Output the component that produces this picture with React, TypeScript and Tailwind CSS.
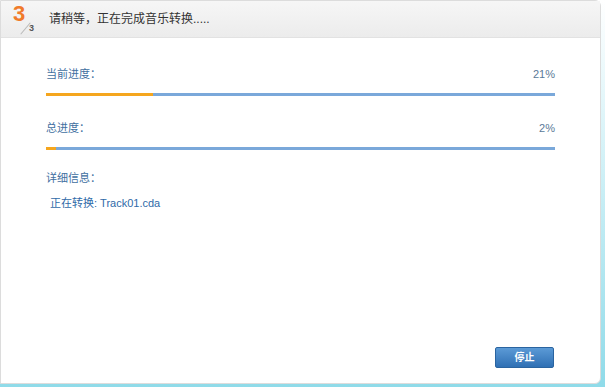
const font = { fontFamily: '"Liberation Sans", "Noto Sans CJK SC", sans-serif' };

function ProgressRow({ label, percent }: { label: string; percent: number }) {
  return (
    <div className="flex flex-col">
      <div className="flex items-center justify-between h-[16px] text-[11px] text-[#3f6f9f]">
        <span>{label}</span>
        <span className="text-[#5a7a98]">{percent}%</span>
      </div>
      <div className="mt-[11px] h-[3px] w-full bg-[#7aa8da] flex">
        <div className="h-full bg-[#f5a61e]" style={{ width: `${percent}%` }} />
      </div>
    </div>
  );
}

export default function App() {
  return (
    <div
      className="w-[605px] h-[387px] bg-gradient-to-b from-white via-[#c8eef5] to-[#8fdbe9] overflow-hidden"
      style={font}
    >
      <div className="w-[601px] h-[384px] bg-white border border-[#dcdcdc] rounded-br-[6px] rounded-tr-[6px] flex flex-col">
        <div className="h-[37px] shrink-0 bg-gradient-to-b from-[#f6f6f6] to-[#ececec] border-b border-[#e2e2e2] flex items-center">
          <div className="relative w-[40px] h-[37px]">
            <span className="absolute left-[12px] top-[2px] text-[22px] font-bold text-[#f07a2a] leading-none">3</span>
            <span className="absolute left-[24px] top-[20px] w-[1px] h-[15px] bg-[#b8b8b8] rotate-[40deg]" />
            <span className="absolute left-[28px] top-[21px] text-[9px] font-bold text-[#555]">3</span>
          </div>
          <span className="ml-[8px] text-[12px] text-[#333]">请稍等，正在完成音乐转换.....</span>
        </div>

        <div className="flex-1 flex flex-col px-[45px] pt-[28px]">
          <ProgressRow label="当前进度：" percent={21} />
          <div className="h-[24px]" />
          <ProgressRow label="总进度：" percent={2} />
          <div className="mt-[20px] text-[11px] text-[#3f6f9f] h-[16px] leading-[16px]">详细信息：</div>
          <div className="mt-[9px] ml-[4px] text-[11px] text-[#2f6aa8] h-[16px] leading-[16px]">正在转换: Track01.cda</div>
          <div className="flex-1" />
          <div className="flex justify-end mb-[15px] mr-[1px]">
            <button className="w-[59px] h-[21px] rounded-[2px] bg-gradient-to-b from-[#5b9ad6] to-[#2f70b4] border border-[#2a64a0] text-white text-[10px] font-bold">
              停止
            </button>
          </div>
        </div>
      </div>
    </div>
  );
}
